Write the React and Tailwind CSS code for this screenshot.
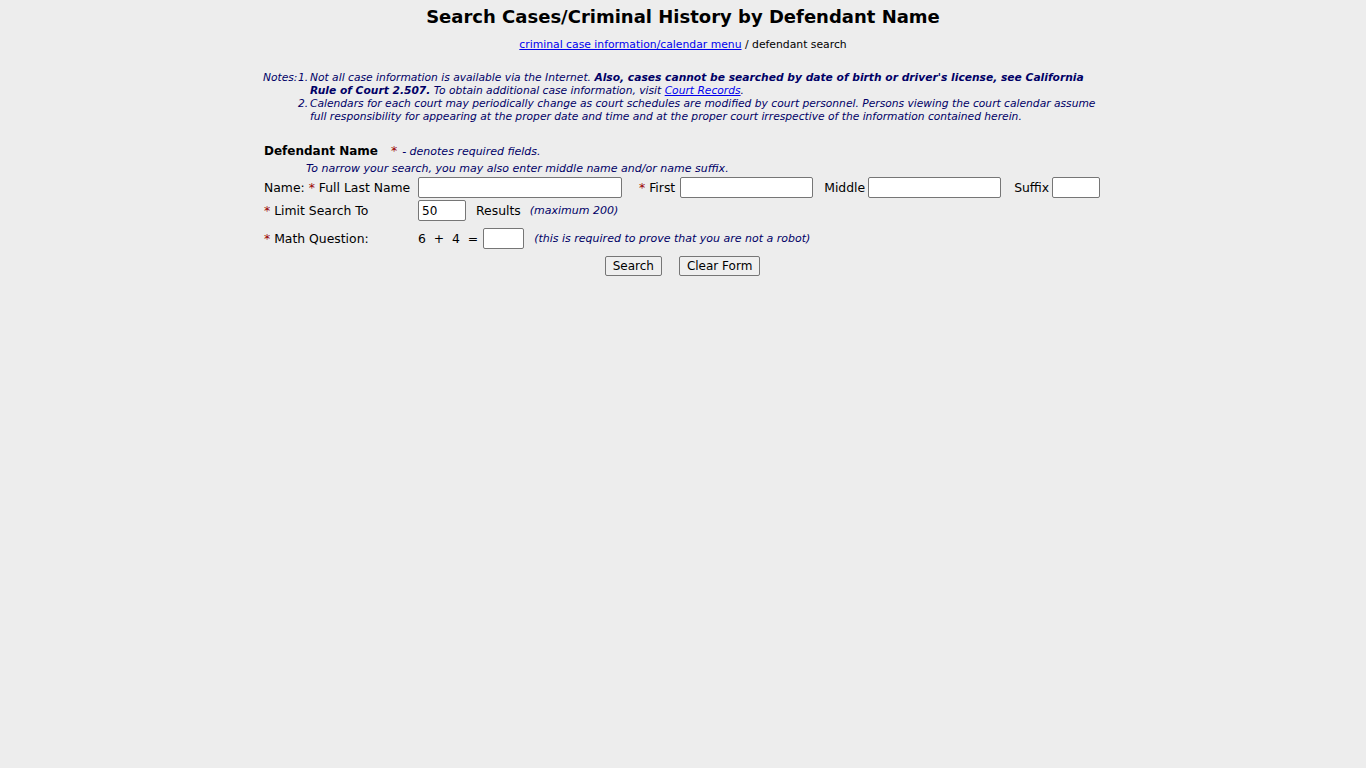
import React from 'react';

const FONT = { fontFamily: '"DejaVu Sans", Verdana, sans-serif' };

const Req = () => <span className="text-[#990000]">*</span>;

const Field = ({ className = '', defaultValue }) => (
  <input
    type="text"
    defaultValue={defaultValue}
    className={`h-[21px] rounded-[2px] border border-[#767676] bg-white px-[3px] text-[12px] text-black outline-none ${className}`}
  />
);

const Btn = ({ children, type = 'button' }) => (
  <button
    type={type}
    className="h-[20px] rounded-[2px] border border-[#767676] bg-[#efefef] px-[7px] text-[12px] leading-none text-black"
  >
    {children}
  </button>
);

export default function App() {
  return (
    <div className="min-h-screen bg-[#ededed] text-black" style={FONT}>
      <div className="mx-auto w-[840px] pt-[6px]">
        <h1 className="text-center text-[18px] font-bold leading-[22px]">
          Search Cases/Criminal History by Defendant Name
        </h1>
        <p className="mt-[10px] text-center text-[10.8px] leading-[14px]">
          <a href="#" className="text-[#0000ee] underline">criminal case information/calendar menu</a>
          {' / defendant search'}
        </p>

        {/* notes */}
        <div className="mt-[19px] flex text-[10.7px] italic leading-[13px] text-[#000066]">
          <span className="w-[35px]">Notes:</span>
          <div className="flex-1">
            <div className="flex">
              <span className="w-[12px]">1.</span>
              <p className="flex-1">
                Not all case information is available via the Internet.{' '}
                <b>Also, cases cannot be searched by date of birth or driver&apos;s license, see California Rule of Court 2.507.</b>{' '}
                To obtain additional case information, visit{' '}
                <a href="#" className="text-[#0000ee] underline">Court Records</a>.
              </p>
            </div>
            <div className="flex">
              <span className="w-[12px]">2.</span>
              <p className="flex-1">
                Calendars for each court may periodically change as court schedules are modified by court personnel. Persons
                viewing the court calendar assume full responsibility for appearing at the proper date and time and at the proper
                court irrespective of the information contained herein.
              </p>
            </div>
          </div>
        </div>

        {/* search form */}
        <form className="mt-[20px] pl-[1px] text-[12.4px] leading-[15px]" onSubmit={(e) => e.preventDefault()}>
          <div className="flex items-baseline">
            <span className="text-[12px] font-bold">Defendant Name</span>
            <span className="ml-[13px]"><Req /></span>
            <span className="ml-[5px] text-[11px] italic text-[#000066]">- denotes required fields.</span>
          </div>
          <p className="mt-[2px] pl-[42px] text-[11px] italic text-[#000066]">
            To narrow your search, you may also enter middle name and/or name suffix.
          </p>

          <div className="mt-[1px] flex items-center">
            <label className="w-[154px]">Name: <Req /> Full Last Name</label>
            <Field className="w-[204px]" />
            <label className="ml-[17px] mr-[5px]"><Req /> First</label>
            <Field className="w-[133px]" />
            <label className="ml-[11px] mr-[3px]">Middle</label>
            <Field className="w-[133px]" />
            <label className="ml-[13px] mr-[3px]">Suffix</label>
            <Field className="w-[48px]" />
          </div>

          <div className="mt-[2px] flex items-center">
            <label className="w-[154px]"><Req /> Limit Search To</label>
            <Field className="w-[48px]" defaultValue="50" />
            <span className="ml-[10px]">Results</span>
            <span className="ml-[9px] text-[11px] italic text-[#000066]">(maximum 200)</span>
          </div>

          <div className="mt-[7px] flex items-center">
            <label className="w-[154px]"><Req /> Math Question:</label>
            <span className="whitespace-pre">6  +  4  =</span>
            <Field className="ml-[5px] w-[41px]" />
            <span className="ml-[10px] text-[11px] italic text-[#000066]">
              (this is required to prove that you are not a robot)
            </span>
          </div>

          <div className="mt-[7px] flex justify-center gap-[17px] pr-[2px]">
            <Btn type="submit">Search</Btn>
            <Btn type="reset">Clear Form</Btn>
          </div>
        </form>
      </div>
    </div>
  );
}
